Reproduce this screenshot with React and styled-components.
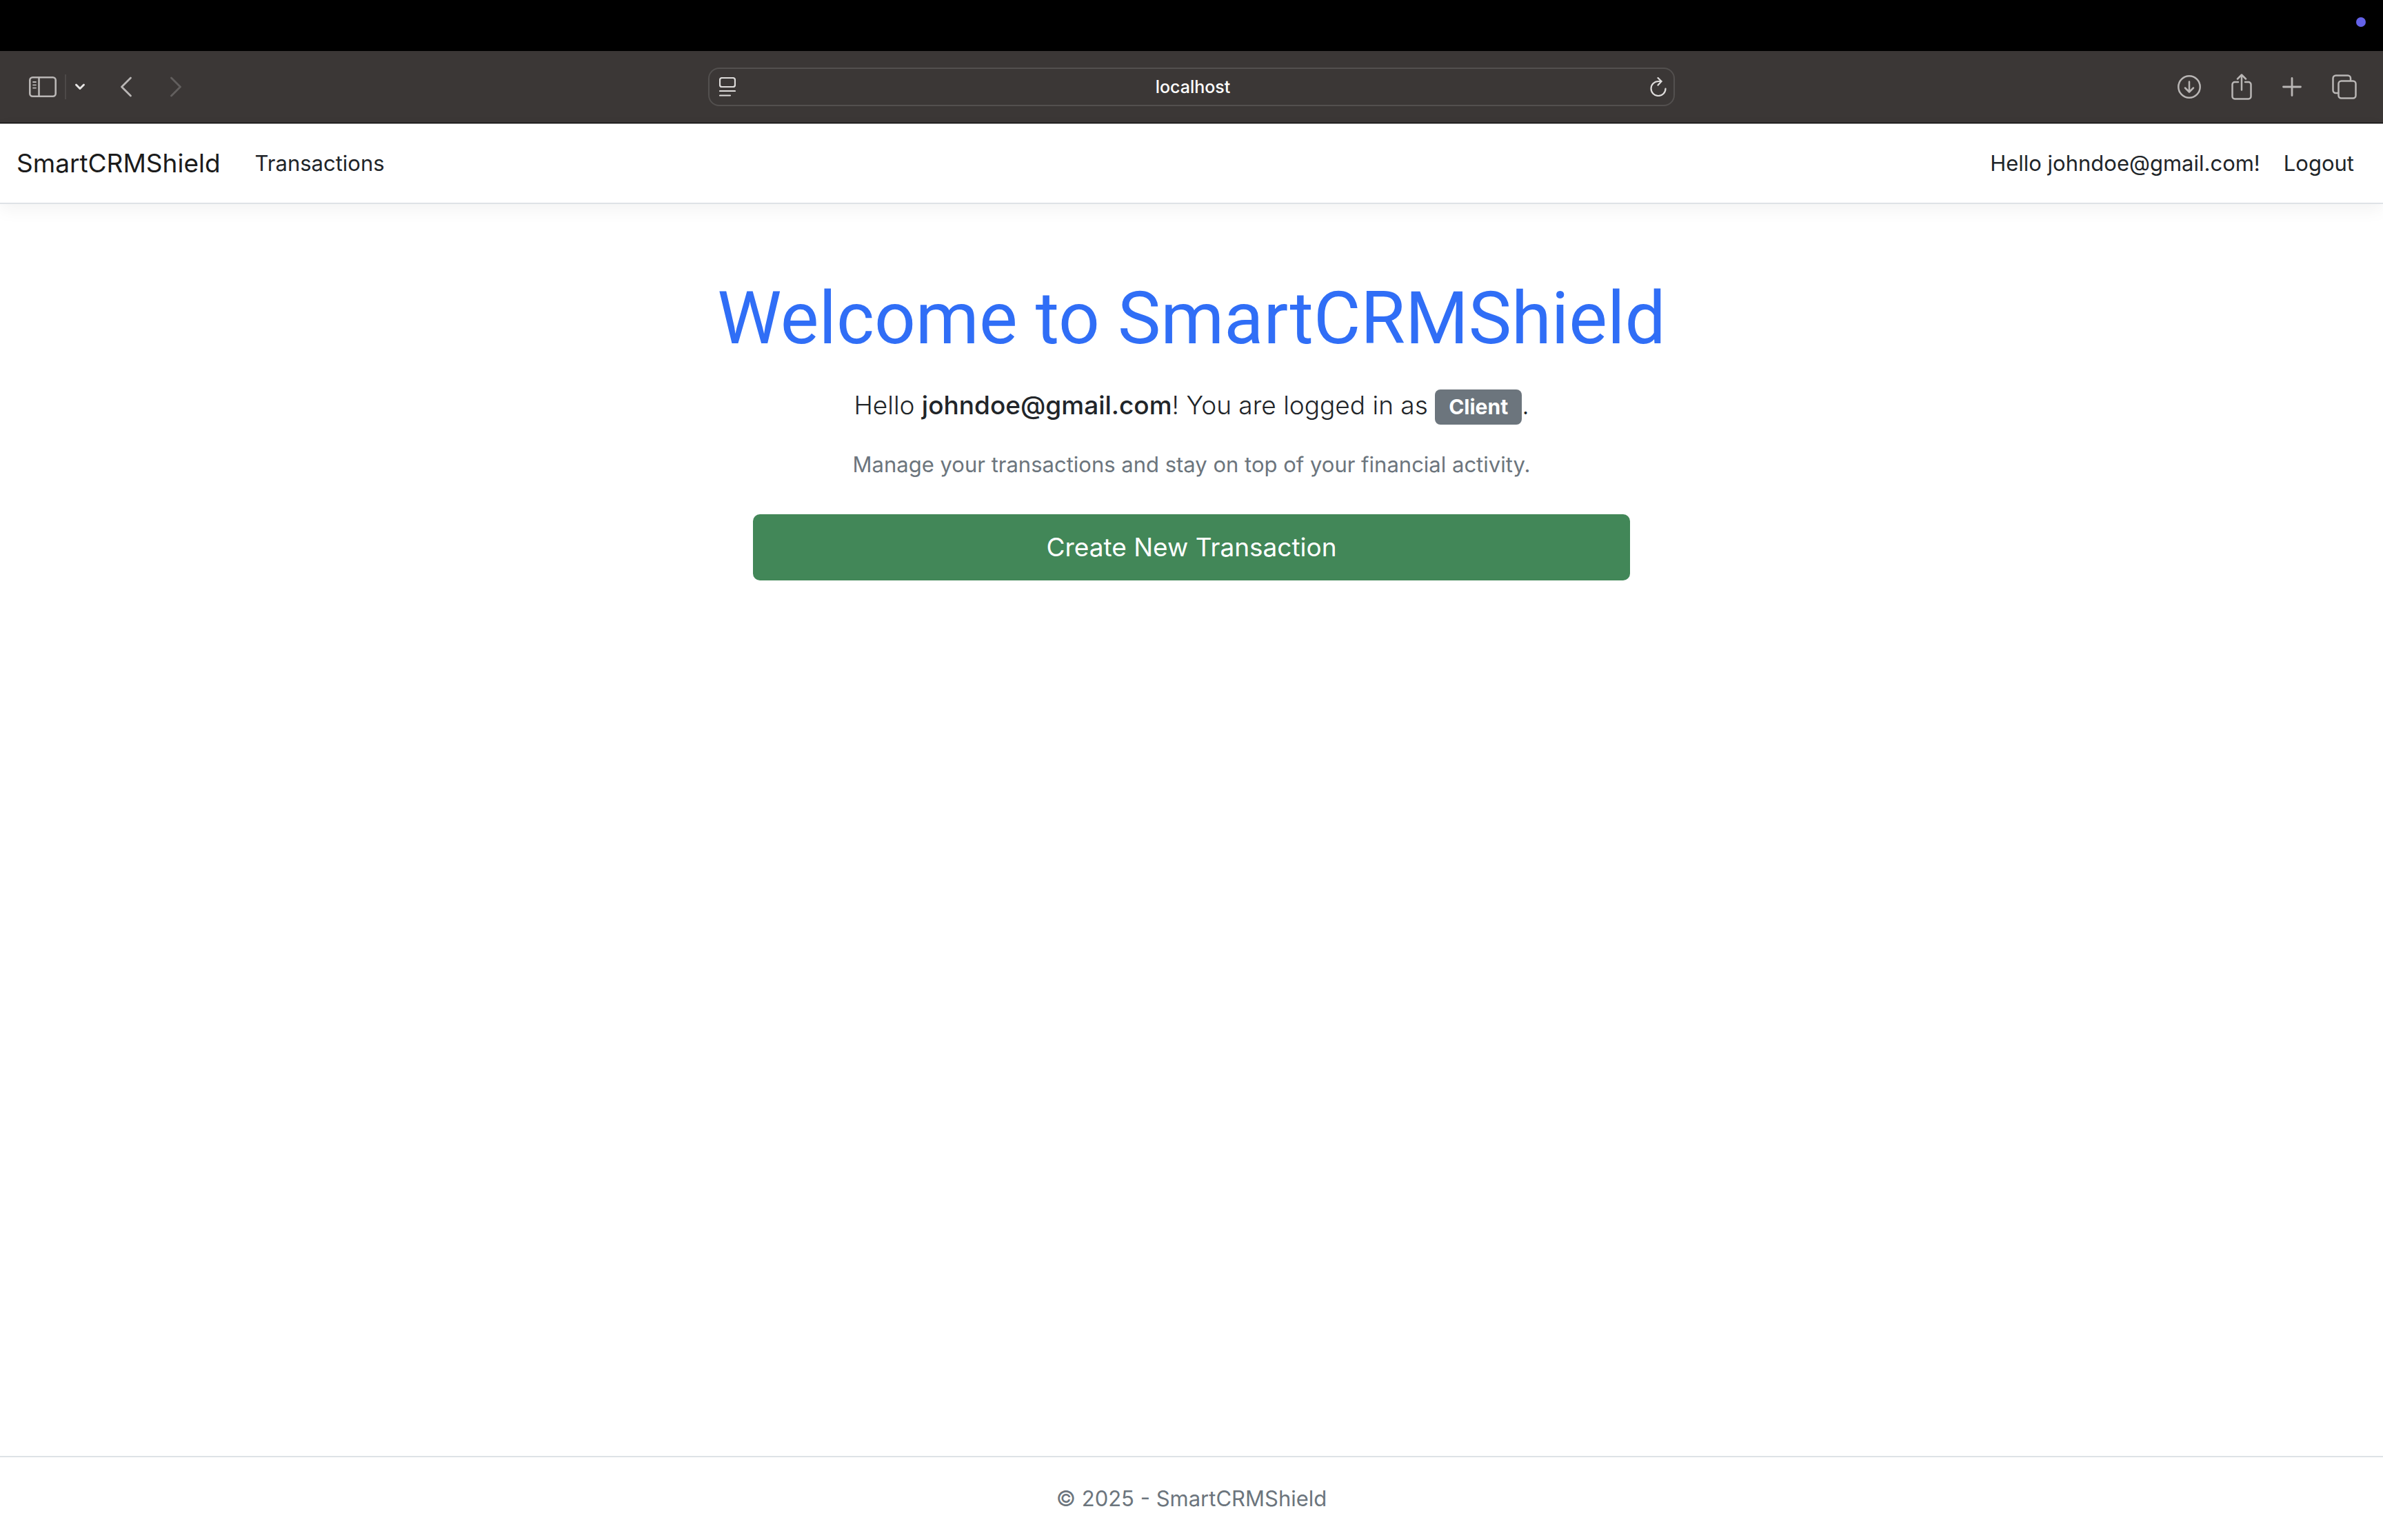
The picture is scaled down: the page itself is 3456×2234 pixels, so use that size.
import React from "react";
import styled, { createGlobalStyle } from "styled-components";

const GlobalStyle = createGlobalStyle`
  *, *::before, *::after { box-sizing: border-box; }
  body {
    margin: 0;
    background: #fff;
    color: #212529;
    font-family: Inter, "Liberation Sans", sans-serif;
    font-size: 31px;
    line-height: 48px;
  }
  button, input { font: inherit; }
  svg { display: block; fill: none; stroke: currentColor; stroke-linecap: round; stroke-linejoin: round; }
`;

const Window = styled.div`
  min-height: 100vh;
  display: flex;
  flex-direction: column;
`;

const MenuBar = styled.div`
  height: 74px;
  padding-right: 25px;
  background: #000;
  display: flex;
  align-items: center;
  justify-content: flex-end;
`;

const RecordingDot = styled.span`
  width: 14px;
  height: 14px;
  margin-bottom: 10px;
  border-radius: 50%;
  background: #6462e8;
`;

const Toolbar = styled.div`
  height: 105px;
  padding: 0 38px;
  background: #3b3736;
  border-bottom: 1px solid #000;
  display: grid;
  grid-template-columns: 1fr minmax(0, 1402px) 1fr;
  align-items: center;
`;

const ToolGroup = styled.div`
  display: flex;
  align-items: center;
  gap: ${(p) => p.$gap}px;
`;

const LeadingTools = styled(ToolGroup)`
  padding-left: 4px;
`;

const TrailingTools = styled(ToolGroup)`
  justify-content: flex-end;
`;

const ToolButton = styled.button`
  padding: 0;
  border: 0;
  background: none;
  color: ${(p) => p.$color || "#b9b6b5"};
  cursor: pointer;
`;

const Separator = styled.span`
  width: 2px;
  height: 36px;
  background: #4d4948;
`;

const AddressBar = styled.div`
  height: 56px;
  padding: 0 10px 0 14px;
  border: 2px solid #53504f;
  border-radius: 16px;
  display: flex;
  align-items: center;
`;

const Address = styled.input`
  flex: 1;
  min-width: 0;
  padding: 0;
  border: 0;
  outline: 0;
  background: none;
  color: #fff;
  font-size: 25px;
  line-height: 32px;
  font-weight: 500;
  text-align: center;
`;

const Navbar = styled.nav`
  height: 117px;
  padding: 0 42px 0 24px;
  border-top: 1px solid #b4b2b1;
  border-bottom: 2px solid #dee2e6;
  box-shadow: 0 8px 24px rgba(0, 0, 0, 0.05);
  display: flex;
  align-items: center;
`;

const Brand = styled.a`
  margin-right: 50px;
  color: #1b1b1b;
  font-size: 37px;
  line-height: 60px;
  text-decoration: none;
`;

const NavLink = styled.a`
  color: #212529;
  text-decoration: none;
`;

const Account = styled.div`
  margin-left: auto;
  display: flex;
  align-items: center;
  gap: 34px;
`;

const LogoutButton = styled.button`
  padding: 0;
  border: 0;
  background: none;
  color: #212529;
  cursor: pointer;
`;

const Main = styled.main`
  flex: 1;
  padding: 100px 24px 0;
  display: flex;
  flex-direction: column;
  align-items: center;
  text-align: center;
`;

const Title = styled.h1`
  margin: 0 0 28px;
  color: #306ef6;
  font-family: Roboto, Inter, sans-serif;
  font-size: 105px;
  line-height: 134px;
  font-weight: 400;
`;

const Lead = styled.p`
  margin: 0 0 32px;
  font-size: 37px;
  line-height: 60px;
  font-weight: 300;
`;

const UserName = styled.strong`
  font-weight: 500;
`;

const Badge = styled.span`
  display: inline-block;
  padding: 10px 20px;
  border-radius: 8px;
  background: #6c757d;
  color: #fff;
  font-size: 30px;
  line-height: 31px;
  font-weight: 700;
`;

const Muted = styled.p`
  margin: 0 0 48px;
  color: #6c757d;
`;

const CreateButton = styled.button`
  width: 100%;
  max-width: 1272px;
  padding: 18px 32px;
  border: 0;
  border-radius: 10px;
  background: #428758;
  color: #fff;
  font-size: 37px;
  line-height: 60px;
  cursor: pointer;
`;

const Footer = styled.footer`
  border-top: 2px solid #dee2e6;
  color: #6c757d;
  line-height: 120px;
  text-align: center;
`;

const SidebarIcon = () => (
  <svg width="40" height="30" viewBox="0 0 40 30" strokeWidth="2.6">
    <rect x="1.3" y="1.3" width="37.4" height="27.4" rx="4" />
    <path d="M14.5 1.5v27" />
    <path strokeWidth="1.8" d="M6 8h4M6 12.3h4M6 16.6h4" />
  </svg>
);

const ChevronDownIcon = () => (
  <svg width="16" height="12" viewBox="0 0 16 12" strokeWidth="3">
    <path d="M2.5 3L8 8.5 13.5 3" />
  </svg>
);

const BackIcon = () => (
  <svg width="18" height="30" viewBox="0 0 18 30" strokeWidth="2.8">
    <path d="M15.5 2l-13 13 13 13" />
  </svg>
);

const ForwardIcon = () => (
  <svg width="18" height="30" viewBox="0 0 18 30" strokeWidth="2.8">
    <path d="M2.5 2l13 13-13 13" />
  </svg>
);

const ReaderIcon = () => (
  <svg width="24" height="28" viewBox="0 0 24 28" strokeWidth="2.2">
    <rect x="1" y="1" width="22" height="13" rx="3" />
    <path d="M1 20h22M1 26.5h15" />
  </svg>
);

const ReloadIcon = () => (
  <svg width="24" height="28" viewBox="0 0 24 28" strokeWidth="2.2">
    <path d="M22.5 16.5A10.5 10.5 0 1 1 12 6h4.5" />
    <path d="M11.5 1l5 5-5 5.5" />
  </svg>
);

const DownloadIcon = () => (
  <svg width="34" height="34" viewBox="0 0 34 34" strokeWidth="2.5">
    <circle cx="17" cy="17" r="15.7" />
    <path d="M17 9.5V24M11 18.5l6 6 6-6" />
  </svg>
);

const ShareIcon = () => (
  <svg width="30" height="38" viewBox="0 0 30 38" strokeWidth="2.5">
    <path d="M10 12H5a3.5 3.5 0 0 0-3.5 3.5V33A3.5 3.5 0 0 0 5 36.5h20a3.5 3.5 0 0 0 3.5-3.5V15.5A3.5 3.5 0 0 0 25 12h-5" />
    <path d="M15 2v21.5M9 7.5l6-6 6 6" />
  </svg>
);

const PlusIcon = () => (
  <svg width="28" height="28" viewBox="0 0 28 28" strokeWidth="2.8">
    <path d="M14 1.5v25M1.5 14h25" />
  </svg>
);

const TabsIcon = () => (
  <svg width="36" height="36" viewBox="0 0 36 36" strokeWidth="2.5">
    <rect x="9.5" y="9.5" width="25" height="25" rx="4" />
    <path d="M9 27H5.5a4 4 0 0 1-4-4V5.5a4 4 0 0 1 4-4H23a4 4 0 0 1 4 4V9" />
  </svg>
);

export default function App() {
  return (
    <>
      <GlobalStyle />
      <Window>
        <MenuBar>
          <RecordingDot />
        </MenuBar>
        <Toolbar>
          <LeadingTools $gap={50}>
            <ToolGroup $gap={12}>
              <ToolButton aria-label="Show sidebar"><SidebarIcon /></ToolButton>
              <Separator />
              <ToolButton aria-label="Tab groups" $color="#e6e4e3"><ChevronDownIcon /></ToolButton>
            </ToolGroup>
            <ToolGroup $gap={54}>
              <ToolButton aria-label="Back"><BackIcon /></ToolButton>
              <ToolButton aria-label="Forward" $color="#625f5e"><ForwardIcon /></ToolButton>
            </ToolGroup>
          </LeadingTools>
          <AddressBar>
            <ToolButton aria-label="Page menu" $color="#dedcdb"><ReaderIcon /></ToolButton>
            <Address aria-label="Address" defaultValue="localhost" />
            <ToolButton aria-label="Reload" $color="#dedcdb"><ReloadIcon /></ToolButton>
          </AddressBar>
          <TrailingTools $gap={44}>
            <ToolButton aria-label="Downloads"><DownloadIcon /></ToolButton>
            <ToolButton aria-label="Share"><ShareIcon /></ToolButton>
            <ToolButton aria-label="New tab"><PlusIcon /></ToolButton>
            <ToolButton aria-label="Tab overview"><TabsIcon /></ToolButton>
          </TrailingTools>
        </Toolbar>
        <Navbar>
          <Brand href="#home">SmartCRMShield</Brand>
          <NavLink href="#transactions">Transactions</NavLink>
          <Account>
            <NavLink href="#account">Hello johndoe@gmail.com!</NavLink>
            <LogoutButton>Logout</LogoutButton>
          </Account>
        </Navbar>
        <Main>
          <Title>Welcome to SmartCRMShield</Title>
          <Lead>
            Hello <UserName>johndoe@gmail.com</UserName>! You are logged in as <Badge>Client</Badge>.
          </Lead>
          <Muted>Manage your transactions and stay on top of your financial activity.</Muted>
          <CreateButton>Create New Transaction</CreateButton>
        </Main>
        <Footer>© 2025 - SmartCRMShield</Footer>
      </Window>
    </>
  );
}
